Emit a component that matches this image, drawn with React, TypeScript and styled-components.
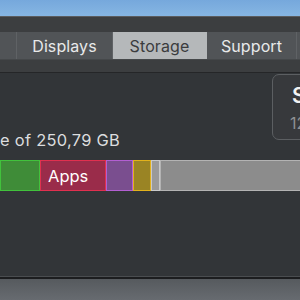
import React from "react"
import styled, { createGlobalStyle } from "styled-components"

const GlobalStyle = createGlobalStyle`
	html, body {
		margin: 0;
		padding: 0;
		background: #3c3e40;
		overflow: hidden;
	}
	body {
		font-family: Inter, "Liberation Sans", sans-serif;
	}
`

const Screen = styled.div`
	width: 300px;
	height: 300px;
	display: flex;
	flex-direction: column;
	overflow: hidden;
`

const Desktop = styled.div`
	height: 16px;
	flex-shrink: 0;
	background: linear-gradient(180deg, #76a8dc 0%, #86b6e3 100%);
	border-bottom: 1px solid #5b5d60;
`

const Window = styled.div`
	flex: 1;
	display: flex;
	flex-direction: column;
	background: #3c3e40;
`

const Toolbar = styled.div`
	height: 56px;
	flex-shrink: 0;
	padding-top: 15px;
	box-sizing: border-box;
	background: #3c3e40;
	border-bottom: 1px solid #252628;
`

const Segments = styled.div`
	display: flex;
	height: 28px;
	background: #515457;
	border-bottom: 1px solid #45484a;
	box-sizing: border-box;
`

const Tab = styled.div<{ $w: number; $active?: boolean }>`
	width: ${(p) => p.$w}px;
	flex-shrink: 0;
	display: flex;
	align-items: center;
	justify-content: center;
	box-sizing: border-box;
	border-right: 1px solid ${(p) => (p.$active ? "#b5b8ba" : "#5f6265")};
	background: ${(p) => (p.$active ? "#b5b8ba" : "transparent")};
	color: ${(p) => (p.$active ? "#3b3c3e" : "#e8e9ea")};
	font-size: 16px;
	letter-spacing: 0.1px;
`

const Panel = styled.div`
	flex: 1;
	display: flex;
	flex-direction: column;
	background: #323538;
	border-bottom: 1px solid #4a4d50;
`

const Header = styled.div`
	display: flex;
	justify-content: space-between;
	align-items: flex-end;
	padding-top: 1px;
`

const Capacity = styled.div`
	color: #dcdddf;
	font-size: 16.4px;
	letter-spacing: 0.3px;
	margin-bottom: -10px;
`

const ManageButton = styled.div`
	width: 40px;
	height: 66px;
	margin-right: -12px;
	box-sizing: border-box;
	border: 1px solid #5c5f62;
	border-radius: 7px;
	background: #37393c;
	display: flex;
	flex-direction: column;
	padding: 9px 0 0 17px;
	gap: 6px;
`

const ButtonTitle = styled.span`
	color: #f2f2f2;
	font-size: 21px;
	font-weight: 600;
	line-height: 24px;
	padding-left: 2px;
`

const ButtonSub = styled.span`
	color: #8e9093;
	font-size: 16px;
	line-height: 18px;
	white-space: nowrap;
`

const Bar = styled.div`
	display: flex;
	height: 31px;
	margin-top: 20px;
	margin-right: -6px;
`

const Segment = styled.div<{ $w: number; $bg: string; $edge: string; $grow?: boolean }>`
	width: ${(p) => p.$w}px;
	flex: ${(p) => (p.$grow ? "1" : "none")};
	box-sizing: border-box;
	background: ${(p) => p.$bg};
	border: 1.5px solid ${(p) => p.$edge};
	color: #ffffff;
	font-size: 16.5px;
	display: flex;
	align-items: center;
	padding-left: 7px;
	overflow: hidden;
`

const Footer = styled.div`
	height: 21px;
	flex-shrink: 0;
	border-top: 2px solid #1c1d1f;
	background: linear-gradient(180deg, #565a5e 0%, #676b70 100%);
`

const segments = [
	{ w: 40, bg: "#3f8c38", edge: "#41c23c" },
	{ w: 66, bg: "#9a2c4a", edge: "#e1304f", label: "Apps" },
	{ w: 27, bg: "#7a4e8f", edge: "#b35fd2" },
	{ w: 18, bg: "#9a8424", edge: "#e2b21c" },
	{ w: 5, bg: "#9a9a9a", edge: "#c9c9c9" },
]

export default function App() {
	return (
		<Screen>
			<GlobalStyle />
			<Desktop />
			<Window>
				<Toolbar>
					<Segments>
						<Tab $w={17} />
						<Tab $w={96}>Displays</Tab>
						<Tab $w={94} $active>
							Storage
						</Tab>
						<Tab $w={90}>Support</Tab>
						<Tab $w={20} />
					</Segments>
				</Toolbar>
				<Panel>
					<Header>
						<Capacity>e of 250,79 GB</Capacity>
						<ManageButton>
							<ButtonTitle>S</ButtonTitle>
							<ButtonSub>12</ButtonSub>
						</ManageButton>
					</Header>
					<Bar>
						{segments.map((s, i) => (
							<Segment key={i} $w={s.w} $bg={s.bg} $edge={s.edge}>
								{s.label}
							</Segment>
						))}
						<Segment $w={0} $grow $bg="#8c8c8c" $edge="#b3b3b3" />
					</Bar>
				</Panel>
				<Footer />
			</Window>
		</Screen>
	)
}
